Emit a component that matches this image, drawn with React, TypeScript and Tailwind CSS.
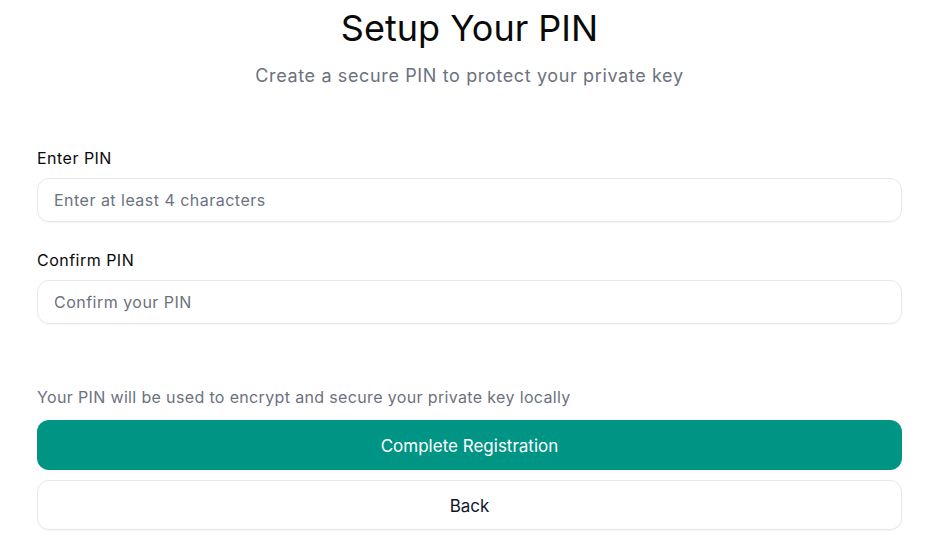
export default function App() {
  return (
    <div className="min-h-screen bg-white font-['Inter',sans-serif]">
      <div className="ml-[37px] w-[865px] pt-2">
        <div className="text-center">
          <h1 className="text-[36px] leading-10 text-[#0a0a0a]">Setup Your PIN</h1>
          <p className="mt-[14px] text-lg leading-7 tracking-[0.035em] text-[#6b7280]">
            Create a secure PIN to protect your private key
          </p>
        </div>

        <div className="mt-[56px] flex flex-col gap-[26px]">
          <div>
            <label className="block text-base leading-6 tracking-[0.03em] text-[#0a0a0a]">Enter PIN</label>
            <input
              type="password"
              placeholder="Enter at least 4 characters"
              className="mt-2 h-[44px] w-full rounded-xl border border-[#e5e7eb] px-4 text-base tracking-[0.03em] shadow-[0_1px_1px_rgba(0,0,0,0.04)] placeholder:text-[#6b7280] focus:outline-none"
            />
          </div>
          <div>
            <label className="block text-base leading-6 tracking-[0.03em] text-[#0a0a0a]">Confirm PIN</label>
            <input
              type="password"
              placeholder="Confirm your PIN"
              className="mt-2 h-[44px] w-full rounded-xl border border-[#e5e7eb] px-4 text-base tracking-[0.03em] shadow-[0_1px_1px_rgba(0,0,0,0.04)] placeholder:text-[#6b7280] focus:outline-none"
            />
          </div>
        </div>

        <p className="mt-[61px] text-base leading-6 tracking-[0.022em] text-[#6b7280]">
          Your PIN will be used to encrypt and secure your private key locally
        </p>
        <div className="mt-[11px] flex flex-col gap-2.5">
          <button className="h-[50px] w-full rounded-xl bg-[#009485] pt-[3px] text-[17px] text-white">
            Complete Registration
          </button>
          <button className="h-[50px] w-full rounded-xl border border-[#e5e7eb] bg-white pt-[3px] text-[17px] text-[#0f172a] shadow-[0_1px_1px_rgba(0,0,0,0.04)]">
            Back
          </button>
        </div>
      </div>
    </div>
  );
}
